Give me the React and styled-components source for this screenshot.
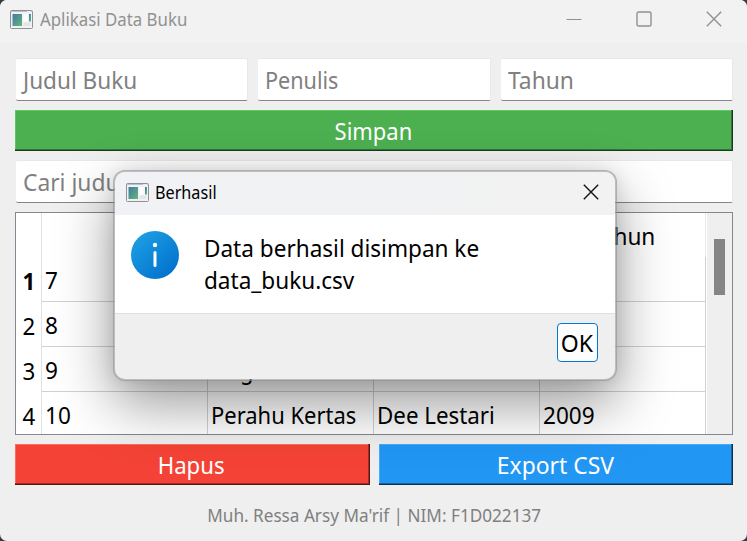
import React from "react";
import styled, { createGlobalStyle } from "styled-components";

const Global = createGlobalStyle`
  * { box-sizing: border-box; }
  body { margin: 0; background: #3a3a3a; overflow: hidden; }
`;

const Window = styled.div`
  position: relative;
  width: 747px;
  height: 541px;
  border-radius: 7px;
  overflow: hidden;
  background: #efefef;
  font-family: "Noto Sans", sans-serif;
  font-size: 24px;
  color: #000;
`;

const TitleBar = styled.header`
  display: flex;
  align-items: center;
  height: 42px;
  padding: 0 25px 4px 10px;
  background: #f2f2f2;
`;

const Label = styled.span`
  display: block;
  flex: none;
  white-space: pre;
  font-size: ${(p) => p.$size || 24}px;
  line-height: ${(p) => p.$line || 32}px;
  font-weight: ${(p) => p.$weight || 400};
  color: ${(p) => p.$color || "inherit"};
  transform: translateY(${(p) => p.$dy || 0}px) scaleX(${(p) => p.$stretch || 1});
  transform-origin: ${(p) => p.$origin || "left"} center;
`;

const WindowControls = styled.div`
  display: flex;
  align-items: center;
  gap: 54px;
  margin-left: auto;
`;

const Content = styled.main`
  padding: 16px 14px 0 15px;
`;

const FieldRow = styled.div`
  display: grid;
  grid-template-columns: 233px 234px 233px;
  column-gap: 9px;
  padding-bottom: 9px;
`;

const Field = styled.div`
  display: flex;
  align-items: center;
  height: 43px;
  margin-left: 1px;
  padding: 1px 0 0 7px;
  border: 1px solid #e8e8e8;
  border-left-width: 0;
  border-bottom-color: #868686;
  border-radius: 2px;
  background: #fff;
`;

const Button = styled.button`
  display: flex;
  align-items: center;
  justify-content: center;
  width: 100%;
  height: 41px;
  padding: 0 2px 0 0;
  border: 0;
  background: ${(p) => p.$bg};
  box-shadow: inset -1px -1px 0 ${(p) => p.$dark}, inset -2px -2px 0 ${(p) => p.$mid},
    inset 1px 1px 0 ${(p) => p.$light};
  color: #fff;
  font-family: inherit;
`;

const SearchRow = styled.div`
  padding: 9px 0 9px;
`;

const Table = styled.section`
  display: flex;
  height: 223px;
  border: 1px solid #828790;
  background: #fff;
  overflow: hidden;
`;

const Grid = styled.div`
  display: grid;
  grid-template-columns: 26px repeat(4, 166px);
  grid-template-rows: 44px repeat(4, 45px);
`;

const HeadCell = styled.div`
  display: flex;
  align-items: center;
  justify-content: center;
  padding-top: 2px;
  border-right: ${(p) => (p.$edge ? "1px solid #e9e9e9" : "0")};
`;

const RowHead = styled.div`
  display: flex;
  align-items: center;
  justify-content: center;
  padding-top: 3px;
  border-right: 1px solid #e0e0e0;
`;

const Cell = styled.div`
  display: flex;
  align-items: center;
  padding: 1px 0 0 3px;
  border-right: 1px solid #d0d0d0;
  border-bottom: 1px solid #d0d0d0;
`;

const ScrollTrack = styled.div`
  flex: 1;
  margin-left: 1px;
  padding: 26px 0 0 7px;
  background: #efefef;
`;

const ScrollThumb = styled.div`
  width: 11px;
  height: 56px;
  background: #858585;
`;

const Actions = styled.div`
  display: grid;
  grid-template-columns: 355px 354px;
  column-gap: 9px;
  padding-top: 9px;
`;

const Footer = styled.footer`
  display: flex;
  justify-content: center;
  padding-top: 14px;
`;

const Dialog = styled.div`
  position: absolute;
  left: 113px;
  top: 170px;
  width: 504px;
  height: 211px;
  border: 2px solid rgba(145, 145, 145, 0.6);
  border-radius: 12px;
  background: #efefef;
  background-clip: padding-box;
  box-shadow: 0 23px 56px rgba(0, 0, 0, 0.4), 0 0 18px rgba(0, 0, 0, 0.1);
`;

const DialogTitle = styled.div`
  display: flex;
  align-items: center;
  height: 43px;
  padding: 0 16px 3px 11px;
  border-radius: 10px 10px 0 0;
  background: linear-gradient(90deg, #f0f2f5, #f2f2f2);
`;

const Grow = styled.div`
  flex: 1;
`;

const DialogBody = styled.div`
  display: flex;
  gap: 25px;
  height: 99px;
  padding: 16px 0 0 16px;
  border-bottom: 1px solid #dfdfdf;
  background: #fff;
`;

const DialogFooter = styled.div`
  display: flex;
  justify-content: flex-end;
  padding: 9px 17px 0 0;
`;

const OkButton = styled.button`
  display: flex;
  align-items: center;
  justify-content: center;
  width: 41px;
  height: 39px;
  padding: 0 1px 0 0;
  border: 1px solid #0078d4;
  border-radius: 4px;
  background: #fdfdfd;
  color: #000;
  font-family: inherit;
`;

const AppIconSvg = styled.svg`
  flex: none;
  margin-right: ${(p) => p.$gap}px;
`;

function AppIcon({ gap, id }) {
  return (
    <AppIconSvg $gap={gap} width="23" height="19" viewBox="0 0 23 19">
      <defs>
        <linearGradient id={id} x1="0" y1="0" x2="1" y2="1">
          <stop offset="0" stopColor="#4579a5" />
          <stop offset="1" stopColor="#5fb878" />
        </linearGradient>
      </defs>
      <rect x="0.5" y="0.5" width="22" height="18" rx="1" fill="#f1f2f3" stroke="#8d9299" />
      <path d="M1 1.5h21" stroke="#b9c0c8" />
      <path d="M17 1.5h4" stroke="#e9edf2" />
      <rect x="2.5" y="4" width="9.5" height="12" fill={`url(#${id})`} />
      <rect x="13.5" y="4" width="4" height="7.5" fill="#fff" />
      <rect x="13.5" y="12.5" width="7" height="3.5" fill="#e4e5e6" />
      <rect x="19" y="4" width="2" height="7.5" fill={`url(#${id})`} />
    </AppIconSvg>
  );
}

function CloseIcon({ color }) {
  return (
    <svg width="16" height="16" viewBox="0 0 16 16">
      <path d="M0.8 0.8l14.4 14.4M15.2 0.8L0.8 15.2" fill="none" stroke={color} strokeWidth="1.4" />
    </svg>
  );
}

function InfoIcon() {
  return (
    <svg width="48" height="48" viewBox="0 0 48 48">
      <defs>
        <linearGradient id="info" x1="0.15" y1="0.1" x2="0.85" y2="0.9">
          <stop offset="0" stopColor="#1c9de2" />
          <stop offset="1" stopColor="#0272ce" />
        </linearGradient>
      </defs>
      <circle cx="24" cy="24" r="24" fill="url(#info)" />
      <circle cx="24" cy="14" r="2.2" fill="#fff" />
      <path d="M24 21.5v13" stroke="#fff" strokeWidth="3" strokeLinecap="round" />
    </svg>
  );
}

const rows = [
  { id: "7", title: "", author: "", year: "" },
  { id: "8", title: "", author: "", year: "" },
  { id: "9", title: "Negeri", author: "", year: "" },
  { id: "10", title: "Perahu Kertas", author: "Dee Lestari", year: "2009" },
];

export default function App() {
  return (
    <>
      <Global />
      <Window>
        <TitleBar>
          <AppIcon gap={7} id="appMain" />
          <Label $size={18} $color="#919191" $stretch={0.935}>Aplikasi Data Buku</Label>
          <WindowControls>
            <svg width="16" height="16" viewBox="0 0 16 16">
              <path d="M0.5 8.5h15" stroke="#919191" />
            </svg>
            <svg width="16" height="16" viewBox="0 0 16 16">
              <rect x="1" y="1" width="14" height="14" rx="1.5" fill="none" stroke="#919191" strokeWidth="1.4" />
            </svg>
            <CloseIcon color="#919191" />
          </WindowControls>
        </TitleBar>
        <Content>
          <FieldRow>
            <Field><Label $color="#808080" $stretch={0.94}>Judul Buku</Label></Field>
            <Field><Label $color="#808080" $stretch={0.9}>Penulis</Label></Field>
            <Field><Label $color="#808080" $stretch={0.95}>Tahun</Label></Field>
          </FieldRow>
          <Button $bg="#4caf50" $light="#5cc860" $mid="#33753a" $dark="#193a1b">
            <Label $stretch={0.915} $origin="center">Simpan</Label>
          </Button>
          <SearchRow>
            <Field><Label $color="#808080" $stretch={0.95}>Cari judul</Label></Field>
          </SearchRow>
          <Table>
            <Grid>
              <RowHead />
              <HeadCell />
              <HeadCell />
              <HeadCell />
              <HeadCell $edge><Label $stretch={0.94} $origin="center">Tahun</Label></HeadCell>
              {rows.map((r, i) => (
                <React.Fragment key={r.id}>
                  <RowHead><Label $weight={i === 0 ? 700 : 400} $stretch={0.93} $origin="center">{i + 1}</Label></RowHead>
                  <Cell><Label $stretch={0.94}>{r.id}</Label></Cell>
                  <Cell><Label $stretch={0.915}>{r.title}</Label></Cell>
                  <Cell><Label $stretch={0.93}>{r.author}</Label></Cell>
                  <Cell><Label $stretch={0.94}>{r.year}</Label></Cell>
                </React.Fragment>
              ))}
            </Grid>
            <ScrollTrack><ScrollThumb /></ScrollTrack>
          </Table>
          <Actions>
            <Button $bg="#f44336" $light="#ff6a5c" $mid="#a32d24" $dark="#511612">
              <Label $stretch={0.925} $origin="center">Hapus</Label>
            </Button>
            <Button $bg="#2196f3" $light="#45abff" $mid="#1664a2" $dark="#0b3251">
              <Label $stretch={0.955} $origin="center">Export CSV</Label>
            </Button>
          </Actions>
          <Footer>
            <Label $size={18} $color="#808080" $stretch={0.953} $origin="center">Muh. Ressa Arsy Ma'rif | NIM: F1D022137</Label>
          </Footer>
        </Content>
        <Dialog role="dialog">
          <DialogTitle>
            <AppIcon gap={6} id="appDialog" />
            <Label $size={18} $stretch={0.9}>Berhasil</Label>
            <Grow />
            <CloseIcon color="#111" />
          </DialogTitle>
          <DialogBody>
            <InfoIcon />
            <Label $stretch={0.94} $dy={1}>{"Data berhasil disimpan ke\ndata_buku.csv"}</Label>
          </DialogBody>
          <DialogFooter>
            <OkButton><Label $stretch={0.96} $origin="center">OK</Label></OkButton>
          </DialogFooter>
        </Dialog>
      </Window>
    </>
  );
}
